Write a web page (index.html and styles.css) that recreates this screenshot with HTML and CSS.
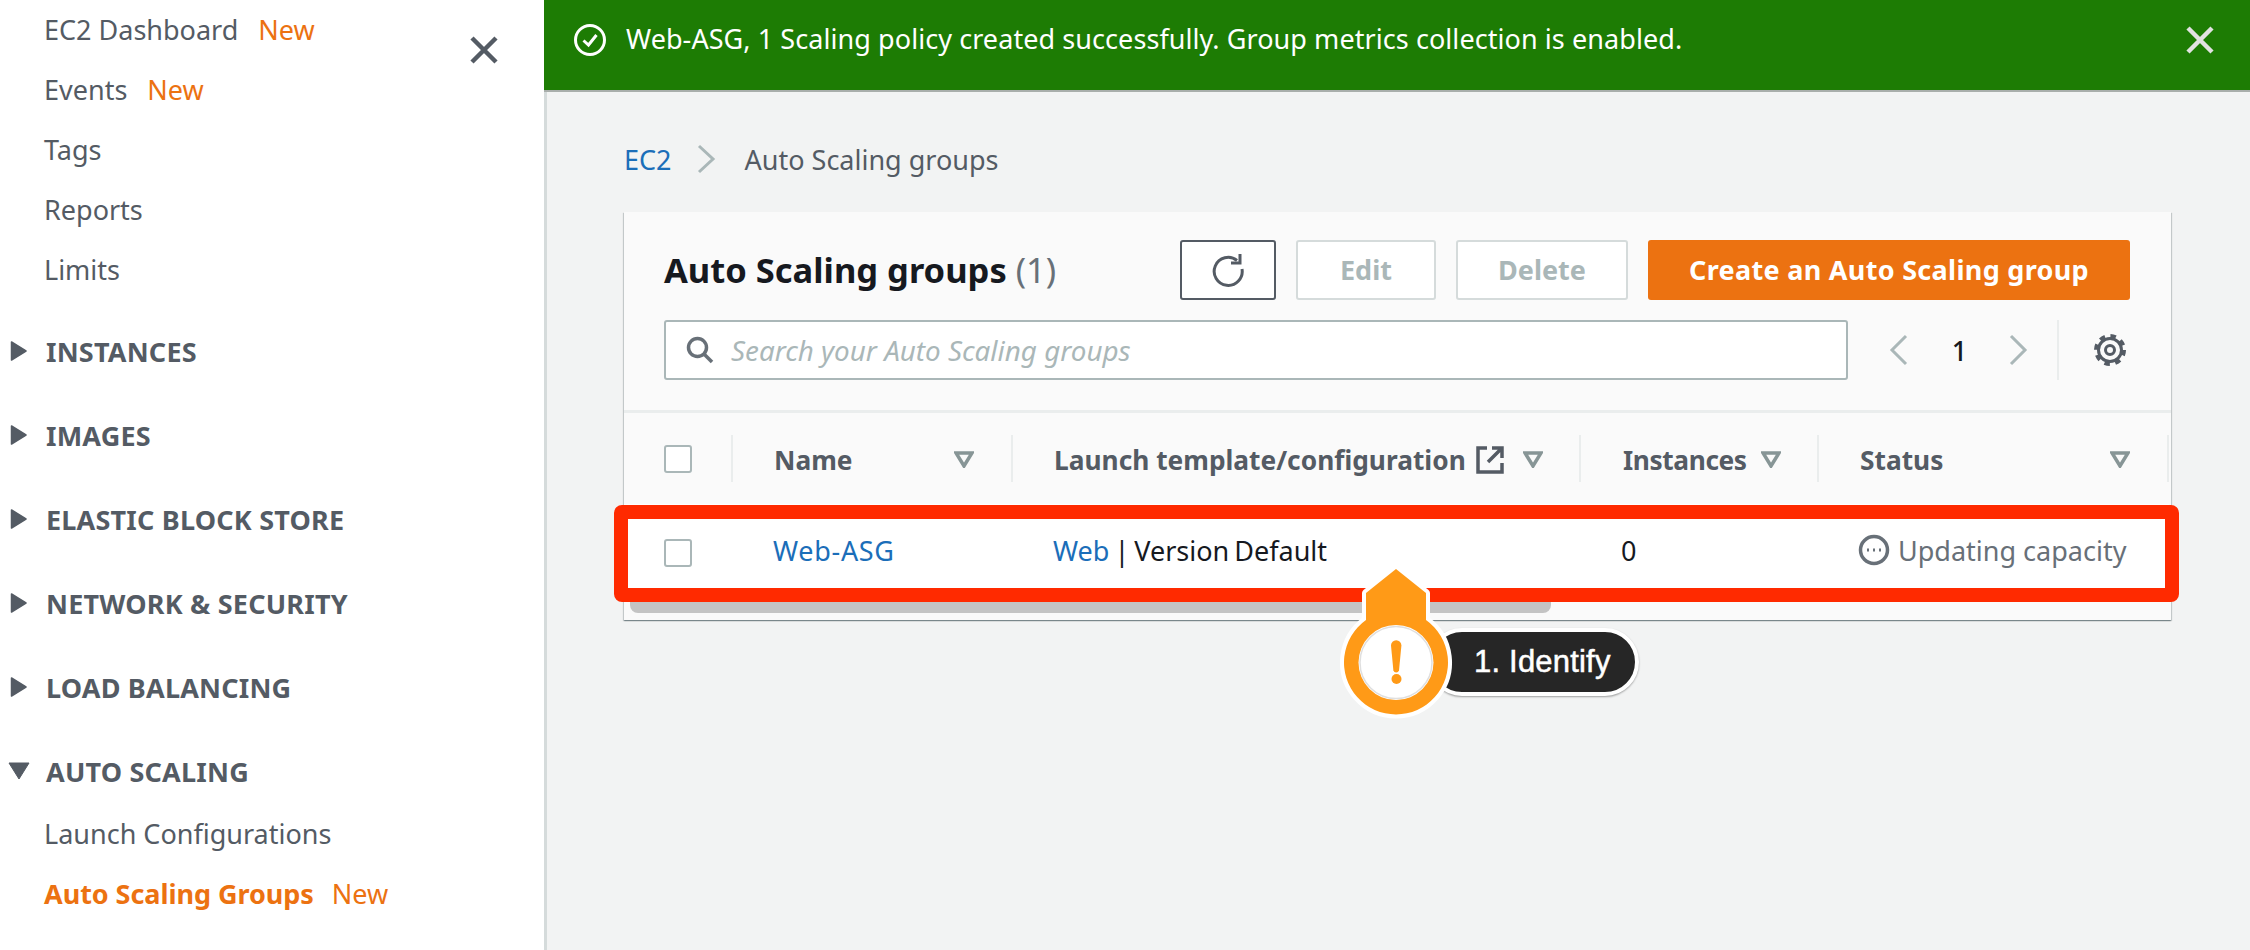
FILE: index.html
```html
<!DOCTYPE html>
<html lang="en">
<head>
<meta charset="utf-8">
<title>Auto Scaling groups</title>
<link rel="stylesheet" href="styles.css">
</head>
<body>
<div class="page">
  <aside class="side">
    <button class="side-close" aria-label="Close"><svg width="28" height="28" viewBox="0 0 28 28"><path d="M2 2 26 26M26 2 2 26" class="x-line"/></svg></button>
    <ul class="nav-top">
      <li class="nav-item">EC2 Dashboard <span class="new">New</span></li>
      <li class="nav-item">Events <span class="new">New</span></li>
      <li class="nav-item">Tags</li>
      <li class="nav-item">Reports</li>
      <li class="nav-item">Limits</li>
    </ul>
    <ul class="nav-sections">
      <li class="sec"><svg class="tri" width="18" height="22" viewBox="0 0 18 22"><path d="M1.5 2 16 11 1.5 20Z"/></svg>INSTANCES</li>
      <li class="sec"><svg class="tri" width="18" height="22" viewBox="0 0 18 22"><path d="M1.5 2 16 11 1.5 20Z"/></svg>IMAGES</li>
      <li class="sec"><svg class="tri" width="18" height="22" viewBox="0 0 18 22"><path d="M1.5 2 16 11 1.5 20Z"/></svg>ELASTIC BLOCK STORE</li>
      <li class="sec"><svg class="tri" width="18" height="22" viewBox="0 0 18 22"><path d="M1.5 2 16 11 1.5 20Z"/></svg>NETWORK &amp; SECURITY</li>
      <li class="sec"><svg class="tri" width="18" height="22" viewBox="0 0 18 22"><path d="M1.5 2 16 11 1.5 20Z"/></svg>LOAD BALANCING</li>
      <li class="sec"><svg class="tri-down" width="22" height="18" viewBox="0 0 22 18"><path d="M1 1H21L11 17Z"/></svg>AUTO SCALING</li>
    </ul>
    <ul class="nav-sub">
      <li class="nav-item">Launch Configurations</li>
      <li class="nav-item"><strong class="active">Auto Scaling Groups</strong> <span class="new new-tight">New</span></li>
    </ul>
  </aside>
  <main class="main">
    <div class="banner">
      <svg class="banner-ok" width="32" height="32" viewBox="0 0 32 32"><circle cx="16" cy="16" r="14.5"/><path d="M9.5 16.500 14.500 21 22.500 11"/></svg>
      <span class="banner-text">Web-ASG, 1 Scaling policy created successfully. Group metrics collection is enabled.</span>
      <svg class="banner-x" width="28" height="28" viewBox="0 0 28 28"><path d="M2 2 26 26M26 2 2 26"/></svg>
    </div>
    <div class="content">
      <nav class="crumbs">
        <a class="link">EC2</a>
        <svg class="crumb-sep" width="20" height="30" viewBox="0 0 20 30"><path d="M3 2 17 15 3 28"/></svg>
        <span class="crumb-cur">Auto Scaling groups</span>
      </nav>
      <section class="card">
        <header class="card-head">
          <div class="head-row">
            <h1 class="title">Auto Scaling groups <span class="count">(1)</span></h1>
            <div class="actions">
              <button class="btn btn-icon" aria-label="Refresh"><svg width="36" height="36" viewBox="0 0 36 36"><path d="M27 9.500A14 14 0 1 0 32 18" class="refresh"/><path d="M30 3V12H21" class="refresh"/></svg></button>
              <button class="btn btn-off btn-edit">Edit</button>
              <button class="btn btn-off btn-del">Delete</button>
              <button class="btn btn-primary">Create an Auto Scaling group</button>
            </div>
          </div>
          <div class="tool-row">
            <div class="search">
              <svg width="30" height="30" viewBox="0 0 30 30"><circle cx="12.500" cy="12.500" r="9"/><path d="M19 19 27 27"/></svg>
              <span class="placeholder">Search your Auto Scaling groups</span>
            </div>
            <div class="pager">
              <svg width="20" height="32" viewBox="0 0 20 32"><path d="M17 2 3 16 17 30"/></svg>
              <span class="page-num">1</span>
              <svg width="20" height="32" viewBox="0 0 20 32"><path d="M3 2 17 16 3 30"/></svg>
            </div>
            <div class="gear">
              <svg width="34" height="34" viewBox="0 0 34 34"><circle cx="17" cy="17" r="11.500" class="g1"/><circle cx="17" cy="17" r="14" class="g2"/><circle cx="17" cy="17" r="4.500" class="g1"/></svg>
            </div>
          </div>
        </header>
        <div class="table">
          <div class="th th-check"><span class="check"></span></div>
          <div class="th th-name"><span>Name</span><svg class="sort" width="20" height="17" viewBox="0 0 20 17"><path d="M2 2H18L10 15Z"/></svg></div>
          <div class="th th-tpl"><span>Launch template/configuration</span>
            <svg class="ext" width="28" height="28" viewBox="0 0 28 28"><path d="M11 2H2V26H26V17"/><path d="M16 2H26V12M26 2 12 16"/></svg>
            <svg class="sort" width="20" height="17" viewBox="0 0 20 17"><path d="M2 2H18L10 15Z"/></svg></div>
          <div class="th th-inst"><span>Instances</span><svg class="sort" width="20" height="17" viewBox="0 0 20 17"><path d="M2 2H18L10 15Z"/></svg></div>
          <div class="th th-status"><span>Status</span><svg class="sort" width="20" height="17" viewBox="0 0 20 17"><path d="M2 2H18L10 15Z"/></svg></div>
          <div class="td td-check"><span class="check"></span></div>
          <div class="td td-name"><a class="link">Web-ASG</a></div>
          <div class="td td-tpl"><a class="link">Web</a> | Version Default</div>
          <div class="td td-inst">0</div>
          <div class="td td-status"><svg width="32" height="32" viewBox="0 0 32 32"><circle cx="16" cy="16" r="13.500"/><path d="M9 16H11M15 16H17M21 16H23" class="dots"/></svg><span>Updating capacity</span></div>
        </div>
        <div class="scroll"><div class="scroll-thumb"></div></div>
      </section>
    </div>
  </main>
</div>
<div class="red-box"></div>
<div class="callout">
  <span class="callout-label">1. Identify</span>
  <svg class="pin" width="116" height="156" viewBox="0 0 116 156">
    <path class="pin-outline" d="M58 4 28 28V55A52 52 0 1 0 88 55V28Z"/>
    <path class="pin-body" d="M58 4 28 28V55A52 52 0 1 0 88 55V28Z"/>
    <circle class="pin-face" cx="58" cy="97.500" r="37.500"/>
    <circle class="pin-ring" cx="58" cy="97.500" r="36"/>
    <path class="pin-mark" d="M53 80.500a5.200 5.200 0 0 1 10.400 0L61 105.500a3 3 0 0 1-5.600 0Z"/>
    <circle class="pin-mark" cx="58.500" cy="114" r="5"/>
  </svg>
</div>
</body>
</html>
```
FILE: styles.css
```css
* { box-sizing: border-box; }
html, body { margin: 0; height: 100%; overflow: hidden; }
body { position: relative; width: 2250px; height: 950px; font-family: "Noto Sans", "Liberation Sans", sans-serif; font-size: 27px; color: #16191f; background: #f2f3f3; }
ul { list-style: none; margin: 0; padding: 0; }
button { font-family: inherit; }
.page { display: flex; height: 950px; }

.side { position: relative; flex: 0 0 544px; background: #fff; color: #545b64; overflow: hidden; }
.side-close { position: absolute; left: 470px; top: 36px; width: 28px; height: 28px; padding: 0; border: 0; background: none; display: block; }
.x-line { stroke: #545b64; stroke-width: 4.5px; fill: none; }
.nav-top { padding-left: 44px; }
.nav-item { height: 60px; line-height: 60px; white-space: nowrap; }
.new { color: #ec7211; margin-left: 13px; }
.new-tight { margin-left: 11px; }
.nav-top + .nav-sections { margin-top: 9px; }
.sec { height: 84px; display: flex; align-items: center; font-weight: 700; white-space: nowrap; letter-spacing: .2px; }
.tri { flex: none; margin-left: 10px; margin-right: 18px; fill: #545b64; stroke: #545b64; stroke-width: 1.5px; stroke-linejoin: round; }
.tri-down { flex: none; margin-left: 8px; margin-right: 16px; fill: #545b64; stroke: #545b64; stroke-width: 1px; stroke-linejoin: round; }
.nav-sub { padding-left: 44px; margin-top: -9px; }
.active { color: #ec7211; font-weight: 700; letter-spacing: -.05px; }

.main { flex: 1; min-width: 0; display: flex; flex-direction: column; }
.banner { flex: 0 0 92px; height: 92px; display: flex; align-items: center; padding: 0 36px 10px 30px; background: #1d7c04; border-bottom: 2px solid #a9aeab; color: #fff; }
.banner-ok { flex: none; fill: none; stroke: #fff; stroke-width: 3px; }
.banner-text { margin-left: 20px; flex: 1; white-space: nowrap; letter-spacing: .07px; line-height: 32px; transform: translateY(-1px); }
.banner-x { flex: none; stroke: #e2e2e2; stroke-width: 4.5px; fill: none; }
.content { flex: 1; padding: 47px 79px 0 77px; border-left: 3px solid #d5dbdb; }

.crumbs { height: 40px; display: flex; align-items: center; }
.link { color: #1b6eb9; }
.crumb-sep { margin: 0 29px 0 24px; stroke: #aab7b8; stroke-width: 3px; fill: none; }
.crumb-cur { color: #545b64; }

.card { margin-top: 33px; height: 408px; background: #fafafa; box-shadow: 0 1px 1px 0 rgba(0,28,36,.3), 1px 1px 1px 0 rgba(0,28,36,.15), -1px 1px 1px 0 rgba(0,28,36,.15); }
.card-head { height: 201px; padding: 28px 41px 0 40px; border-bottom: 3px solid #eaeded; }
.head-row { display: flex; align-items: center; justify-content: space-between; height: 60px; }
.title { margin: 0; font-size: 34.500px; font-weight: 700; white-space: nowrap; line-height: 60px; }
.count { font-weight: 400; color: #687078; }
.actions { display: flex; gap: 20px; }
.btn { height: 60px; padding: 0 0 2px; border-radius: 3px; font-size: 27px; font-weight: 700; background: #fff; }
.btn-icon { width: 96px; border: 2.5px solid #545b64; display: flex; align-items: center; justify-content: center; }
.refresh { fill: none; stroke: #545b64; stroke-width: 3px; }
.btn-off { border: 2.5px solid #d5dbdb; color: #aab7b8; }
.btn-edit { width: 140px; }
.btn-del { width: 172px; }
.btn-primary { width: 482px; border: 0; background: #ec7211; color: #fff; letter-spacing: .3px; }
.tool-row { display: flex; align-items: center; margin-top: 20px; height: 60px; }
.search { flex: 0 0 1184px; height: 60px; display: flex; align-items: center; padding-left: 19px; background: #fff; border: 2.5px solid #aab7b8; border-radius: 3px; }
.search svg { flex: none; fill: none; stroke: #687078; stroke-width: 3.5px; }
.placeholder { margin-left: 16px; font-style: italic; font-size: 27.800px; color: #aab7b8; }
.pager { flex: 0 0 209px; display: flex; align-items: center; padding-left: 41px; }
.pager svg { flex: none; fill: none; stroke: #aab7b8; stroke-width: 3px; }
.page-num { width: 99px; padding-left: 2px; text-align: center; font-weight: 500; }
.gear { align-self: stretch; flex: none; width: 80px; border-left: 2px solid #eaeded; padding-left: 34px; display: flex; align-items: center; }
.gear svg { flex: none; fill: none; }
.g1 { stroke: #545b64; stroke-width: 3px; }
.g2 { stroke: #545b64; stroke-width: 4px; stroke-dasharray: 5.500 5.500; }

.table { display: grid; grid-template-columns: 109px 280px 568px 238px 350px; grid-template-rows: 91px 97px; }
.th { display: flex; align-items: center; padding-top: 2px; color: #545b64; font-weight: 700; font-size: 26.300px; position: relative; white-space: nowrap; }
.th::after { content: ""; position: absolute; right: 0; top: 22px; height: 47px; border-right: 2px solid #eaeded; }
.th-check, .td-check { padding-left: 40px; }
.th-check { padding-top: 0; }
.check { display: block; width: 28px; height: 28px; background: #fff; border: 2.5px solid #aab7b8; border-radius: 3px; }
.th-name { padding-left: 41px; }
.th-name .sort { margin-left: auto; margin-right: 39px; }
.th-tpl { padding-left: 41px; }
.ext { margin-left: 10px; flex: none; fill: none; stroke: #545b64; stroke-width: 3.500px; }
.th-tpl .sort { margin-left: 19px; }
.th-inst { padding-left: 42px; }
.th-inst span { letter-spacing: -.4px; }
.th-inst .sort { margin-left: 14px; }
.th-status { padding-left: 41px; }
.th-status .sort { margin-left: auto; margin-right: 39px; }
.sort { flex: none; fill: none; stroke: #879596; stroke-width: 3.500px; }
.td { display: flex; align-items: center; white-space: pre; background: #fff; padding-bottom: 5px; }
.td-check { padding-bottom: 0; }
.td-name { padding-left: 40px; letter-spacing: .7px; }
.td-tpl { padding-left: 40px; word-spacing: -2px; }
.td-inst { padding-left: 40px; }
.td-status { padding-left: 39px; color: #687078; }
.td-status svg { flex: none; margin-right: 8px; fill: none; stroke: #687078; stroke-width: 3.500px; }
.dots { stroke-width: 3px; }
.scroll { height: 18px; padding: 0 0 6px 6px; }
.scroll-thumb { width: 921px; height: 12px; background: #c4c4c4; border-radius: 0 0 8px 8px; }

.red-box { position: absolute; left: 614px; top: 505px; width: 1565px; height: 97px; border: 14px solid #ff2a00; border-radius: 8px; }
.callout { position: absolute; left: 1338px; top: 565px; width: 306px; height: 156px; }
.callout-label { position: absolute; left: 90px; top: 63px; width: 211px; height: 68px; padding-left: 42px; line-height: 60px; background: #262626; border: 4px solid #fff; border-radius: 34px; color: #fff; font-family: "Liberation Sans", Arial, sans-serif; font-size: 31px; letter-spacing: .2px; -webkit-text-stroke: .5px #fff; box-shadow: 0 1px 2px rgba(0,0,0,.35); white-space: nowrap; }
.pin { position: absolute; left: 0; top: 0; }
.pin-outline { fill: none; stroke: #fff; stroke-width: 8px; stroke-linejoin: round; }
.pin-body { fill: #ff9a17; }
.pin-face { fill: #fff; }
.pin-ring { fill: none; stroke: #dfdfdf; stroke-width: 1.5px; }
.pin-mark { fill: #ff9a17; }
```
